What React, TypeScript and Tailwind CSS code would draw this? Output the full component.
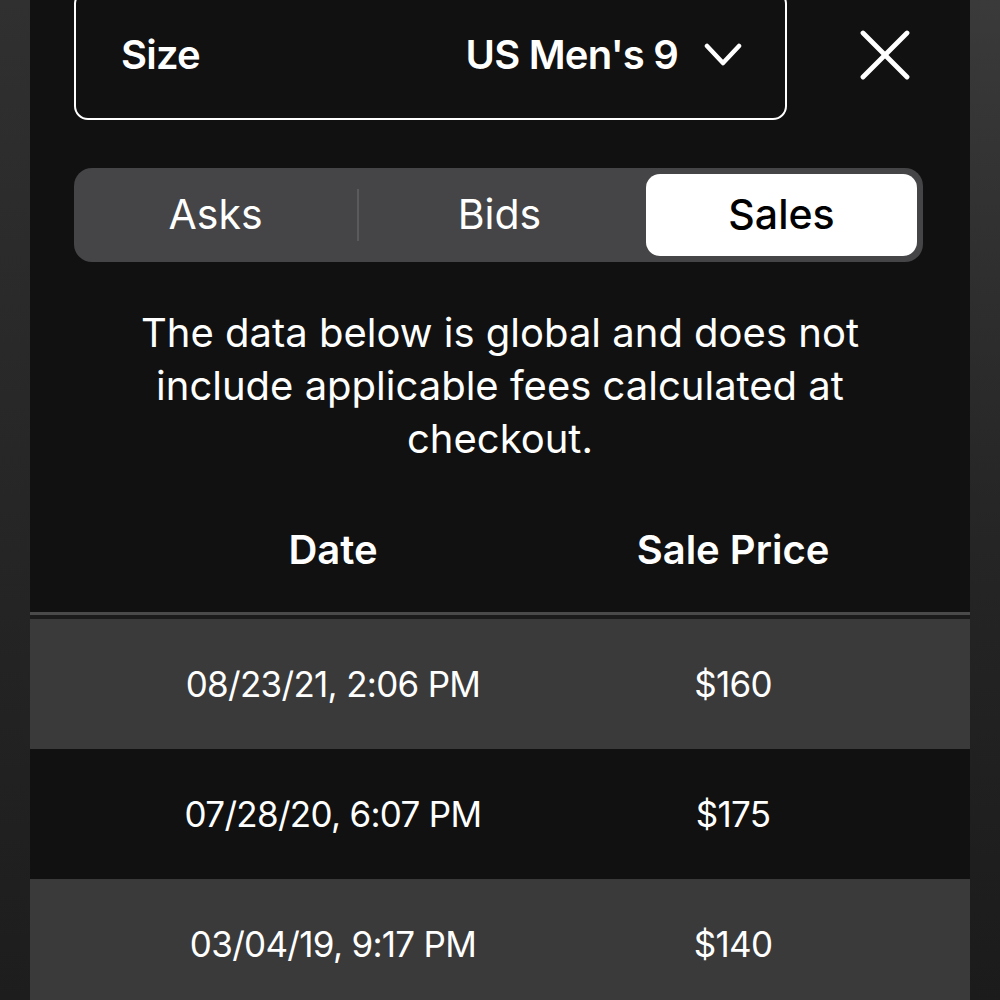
const sales = [
  { date: '08/23/21, 2:06 PM', price: '$160' },
  { date: '07/28/20, 6:07 PM', price: '$175' },
  { date: '03/04/19, 9:17 PM', price: '$140' },
];

const tabs = ['Asks', 'Bids', 'Sales'];

export default function App() {
  const active = 'Sales';

  return (
    <div className="flex h-[1000px] w-[1000px] overflow-hidden bg-[#111111] font-['Inter',sans-serif] text-white">
      <div className="w-[30px] shrink-0 bg-linear-to-b from-[#303030] via-[#262626] to-[#1d1d1d]" />

      <main className="flex w-[940px] shrink-0 flex-col bg-[#111111]">
        {/* size picker */}
        <div className="-mt-[10px] flex items-center pl-[44px]">
          <button className="flex h-[130px] w-[713px] items-center justify-between rounded-[14px] border-2 border-white pl-[45px] pr-[43px]">
            <span className="text-[40px] font-semibold tracking-[-0.02em]">Size</span>
            <span className="flex items-center gap-[26px]">
              <span className="text-[40px] font-semibold tracking-[-0.02em]">US Men's 9</span>
              <svg width="38" height="26" viewBox="0 0 38 26" fill="none" stroke="currentColor" strokeWidth="4.5" strokeLinecap="round" strokeLinejoin="round">
                <polyline points="3,4 19,21 35,4" />
              </svg>
            </span>
          </button>
          <button className="ml-[73px] text-white" aria-label="Close">
            <svg width="50" height="50" viewBox="0 0 50 50" fill="none" stroke="currentColor" strokeWidth="4.8" strokeLinecap="round">
              <line x1="3" y1="3" x2="47" y2="47" />
              <line x1="47" y1="3" x2="3" y2="47" />
            </svg>
          </button>
        </div>

        {/* tabs */}
        <div className="ml-[44px] mt-[48px] grid h-[94px] w-[849px] grid-cols-3 rounded-[18px] bg-[#454547]">
          {tabs.map((tab, i) => (
            <div key={tab} className="relative flex items-center">
              {i === 1 && <div className="h-[52px] w-[2px] bg-[#5a5a5c]" />}
              {tab === active ? (
                <div className="m-[6px] flex h-[82px] flex-1 items-center justify-center rounded-[14px] bg-white text-[41px] font-medium text-black">
                  {tab}
                </div>
              ) : (
                <div className="flex flex-1 items-center justify-center text-[41px]">{tab}</div>
              )}
            </div>
          ))}
        </div>

        <p className="mx-auto mt-[44px] w-[740px] text-center text-[40px] leading-[53px]">
          The data below is global and does not include applicable fees calculated at checkout.
        </p>

        {/* table */}
        <div className="mt-[55px] grid h-[60px] grid-cols-2 items-center pl-[103px] pr-[37px] text-center text-[40px] font-semibold">
          <span>Date</span>
          <span>Sale Price</span>
        </div>
        <div className="mt-[32px] h-[3px] shrink-0 bg-[#4a4a4a]" />
        <div className="h-[4px] shrink-0 bg-[#1b1b1b]" />

        {sales.map((row, i) => (
          <div
            key={row.date}
            className={`grid h-[130px] shrink-0 grid-cols-2 items-center pl-[103px] pr-[37px] text-center text-[35px] tracking-[-0.02em] ${
              i % 2 === 0 ? 'bg-[#3a3a3a]' : 'bg-[#111111]'
            }`}
          >
            <span>{row.date}</span>
            <span>{row.price}</span>
          </div>
        ))}
      </main>

      <div className="w-[30px] shrink-0 bg-linear-to-b from-[#3a3a3a] via-[#262626] to-[#1b1b1b]" />
    </div>
  );
}
